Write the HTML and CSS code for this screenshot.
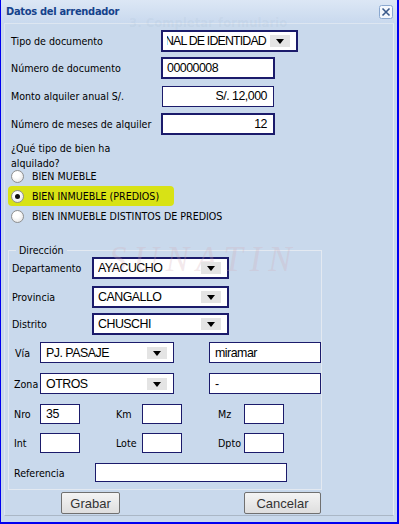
FILE: index.html
```html
<!DOCTYPE html>
<html lang="es">
<head>
<meta charset="utf-8">
<title>Datos del arrendador</title>
<link rel="stylesheet" href="styles.css">
</head>
<body>
<div class="window">
  <div class="titlebar">
    <span class="title">Datos del arrendador</span>
    <span class="close"><svg width="14" height="14" viewBox="0 0 14 14"><rect x="0.5" y="0.5" width="13" height="13" rx="2" fill="#f4f8fd" stroke="#8aa8d0"/><path d="M3.5 3.5 L10.5 10.5 M10.5 3.5 L3.5 10.5" stroke="#3a5a8c" stroke-width="1.6"/></svg></span>
  </div>
  <div class="ghost">3. Completar formulario</div>
  <div class="panel">
    <div class="row r1">
      <span class="lbl">Tipo de documento</span>
      <div class="select thick w136">
        <span class="sel-text clip">NAL DE IDENTIDAD</span>
        <span class="arrow"></span>
      </div>
    </div>
    <div class="row r2">
      <span class="lbl">Número de documento</span>
      <div class="input thick w114">00000008</div>
    </div>
    <div class="row r3">
      <span class="lbl">Monto alquiler anual S/.</span>
      <div class="input thin w112 right">S/. 12,000</div>
    </div>
    <div class="row r4">
      <span class="lbl">Número de meses de alquiler</span>
      <div class="input thick w114 right">12</div>
    </div>
    <div class="question">¿Qué tipo de bien ha alquilado?</div>
    <div class="radios">
      <label class="radio"><span class="dot"></span>BIEN MUEBLE</label>
      <label class="radio on"><span class="dot"></span>BIEN INMUEBLE (PREDIOS)</label>
      <label class="radio"><span class="dot"></span>BIEN INMUEBLE DISTINTOS DE PREDIOS</label>
    </div>
    <fieldset class="dir">
      <legend>Dirección</legend>
      <div class="watermark">SUNATIN</div>
      <div class="frow f1">
        <span class="flbl l83">Departamento</span>
        <div class="select thick w136"><span class="sel-text">AYACUCHO</span><span class="arrow"></span></div>
      </div>
      <div class="frow f2">
        <span class="flbl l83">Provincia</span>
        <div class="select thick w136"><span class="sel-text">CANGALLO</span><span class="arrow"></span></div>
      </div>
      <div class="frow f3">
        <span class="flbl l83">Distrito</span>
        <div class="select thick w136"><span class="sel-text">CHUSCHI</span><span class="arrow"></span></div>
      </div>
      <div class="frow f4">
        <span class="flbl l31 p6">Vía</span>
        <div class="select thin w134"><span class="sel-text">PJ. PASAJE</span><span class="arrow"></span></div>
        <span class="spacer35"></span>
        <div class="input thin w112">miramar</div>
      </div>
      <div class="frow f5">
        <span class="flbl l31">Zona</span>
        <div class="select thin w134"><span class="sel-text">OTROS</span><span class="arrow"></span></div>
        <span class="spacer35"></span>
        <div class="input thin w112">-</div>
      </div>
      <div class="frow f6">
        <span class="flbl l31">Nro</span>
        <div class="input thin w40">35</div>
        <span class="flbl l62">Km</span>
        <div class="input thin w40"></div>
        <span class="flbl l62">Mz</span>
        <div class="input thin w40"></div>
      </div>
      <div class="frow f7">
        <span class="flbl l31">Int</span>
        <div class="input thin w40"></div>
        <span class="flbl l62">Lote</span>
        <div class="input thin w40"></div>
        <span class="flbl l62">Dpto</span>
        <div class="input thin w40"></div>
      </div>
      <div class="frow f8">
        <span class="flbl l86">Referencia</span>
        <div class="input thin w192"></div>
      </div>
    </fieldset>
    <div class="buttons">
      <button class="btn grabar">Grabar</button>
      <button class="btn cancelar">Cancelar</button>
    </div>
  </div>
</div>
</body>
</html>
```
FILE: styles.css
```css
* { box-sizing: border-box; }
html, body { margin: 0; padding: 0; }
body {
  width: 399px;
  height: 524px;
  overflow: hidden;
  background: #c9d9ec;
  font-family: "DejaVu Sans Condensed", "DejaVu Sans", sans-serif;
  font-stretch: condensed;
  font-size: 10.6px;
  color: #000;
}
.window {
  position: relative;
  width: 399px;
  height: 524px;
  background: #c9d9ec;
  border-left: 1px solid #0000f0;
  border-right: 2px solid #0000f0;
  border-bottom: 2px solid #0000f0;
  display: flex;
  flex-direction: column;
}
.titlebar {
  height: 23px;
  flex: none;
  display: flex;
  align-items: center;
  justify-content: space-between;
  padding: 0 4px 0 5px;
  background: linear-gradient(#dce7f5, #c9d9ee);
}
.title {
  font-weight: bold;
  font-size: 11px;
  letter-spacing: -0.3px;
  color: #15428b;
  margin-top: -1px;
}
.close { display: flex; margin-top: 1px; }
.ghost {
  position: absolute;
  left: 128px;
  top: 15px;
  font-family: "DejaVu Sans", sans-serif;
  font-weight: bold;
  font-size: 13px;
  color: rgba(120, 140, 170, 0.08);
  pointer-events: none;
  z-index: 2;
}
.panel {
  flex: 1;
  margin: 0 3px 6px 3px;
  border: 1px solid #dde6f1;
  border-bottom-color: #aab7c6;
  border-right-color: #e6edf5;
  padding: 6px 0 0 6px;
  background: #c9d9ec;
}
.row {
  display: flex;
  align-items: center;
  height: 22px;
}
.r2 { margin-top: 5px; }
.r3 { margin-top: 6px; }
.r4 { margin-top: 6px; }
.lbl { width: 150px; flex: none; }
.r3 .input { margin-left: 1px; }

.input, .select {
  background: #fff;
  display: flex;
  align-items: center;
  font-family: "Liberation Sans", sans-serif;
  font-size: 12.4px;
  letter-spacing: -0.5px;
  color: #000;
  flex: none;
  overflow: hidden;
  white-space: nowrap;
}
.thick { border: 2px solid #1b1b6b; height: 22px; padding-left: 4px; }
.thin { border: 1px solid #1b1b6b; height: 21px; padding-left: 5px; }
.right { justify-content: flex-end; padding-right: 6px; }
.w136 { width: 137px; }
.w114 { width: 114px; }
.w112 { width: 112px; }
.w134 { width: 134px; }
.w40 { width: 40px; }
.w192 { width: 192px; }

.select { justify-content: space-between; padding-right: 6px; }
.sel-text { flex: 1; overflow: hidden; }
.sel-text.clip { text-indent: -2px; letter-spacing: -0.85px; }
.arrow {
  flex: none;
  width: 20px;
  height: 12px;
  background: #e4e4e4;
  position: relative;
}
.arrow::after {
  content: "";
  position: absolute;
  left: 6px;
  top: 4px;
  border-left: 4px solid transparent;
  border-right: 4px solid transparent;
  border-top: 5px solid #000;
}

.question {
  width: 112px;
  margin-top: 6px;
  line-height: 15px;
}
.radios {
  display: flex;
  flex-direction: column;
  margin-top: -5px;
}
.radio {
  display: flex;
  align-items: center;
  height: 20px;
  gap: 8px;
  width: 166px;
  margin-left: -3px;
  padding-left: 3px;
  white-space: nowrap;
}
.radio.on {
  background: #d8e215;
  border-radius: 4px;
}
.dot {
  width: 13px;
  height: 13px;
  border-radius: 50%;
  border: 1px solid #8e8f8f;
  background: radial-gradient(circle at 40% 35%, #ffffff 30%, #dcdcdc 100%);
  flex: none;
  position: relative;
}
.radio.on .dot::after {
  content: "";
  position: absolute;
  left: 3px;
  top: 3px;
  width: 5px;
  height: 5px;
  border-radius: 50%;
  background: #111;
}

.dir {
  position: relative;
  margin: 18px 0 0 -3px;
  width: 302px;
  height: 246px;
  border: 1px solid #e3e9f1;
  padding: 1px 0 0 0;
}
.dir legend {
  padding: 0 3px;
  margin-left: 7px;
}
.watermark {
  position: absolute;
  left: 100px;
  top: -16px;
  font-family: "Liberation Serif", serif;
  font-style: italic;
  font-size: 35px;
  letter-spacing: 7px;
  color: rgba(210, 170, 180, 0.26);
  pointer-events: none;
}
.frow {
  display: flex;
  align-items: center;
}
.flbl { flex: none; padding-left: 3px; }
.l83 { width: 83px; }
.l31 { width: 31px; padding-left: 5px; }
.l31.p6 { padding-left: 6px; }
.l62 { width: 62px; padding-left: 36px; }
.l86 { width: 86px; padding-left: 5px; }
.spacer35 { width: 35px; flex: none; }
.f1 { height: 22px; margin-top: 0; }
.f2 { height: 22px; margin-top: 7px; }
.f3 { height: 22px; margin-top: 5px; }
.f4 { height: 21px; margin-top: 7px; }
.f5 { height: 21px; margin-top: 10px; }
.f6 { height: 20px; margin-top: 10px; }
.f6 .thin, .f7 .thin { height: 20px; }
.f7 { height: 20px; margin-top: 9px; }
.f8 { height: 19px; margin-top: 10px; }
.f8 .thin { height: 19px; }

.buttons {
  display: flex;
  margin-top: 2px;
  height: 22px;
}
.btn {
  font-family: "Liberation Sans", sans-serif;
  font-size: 13px;
  color: #333;
  height: 22px;
  border: 1px solid #707070;
  border-radius: 2px;
  background: linear-gradient(#f4f4f4, #dedede);
  padding: 0;
}
.grabar { width: 59px; margin-left: 50px; }
.cancelar { width: 77px; margin-left: 124px; }
```
